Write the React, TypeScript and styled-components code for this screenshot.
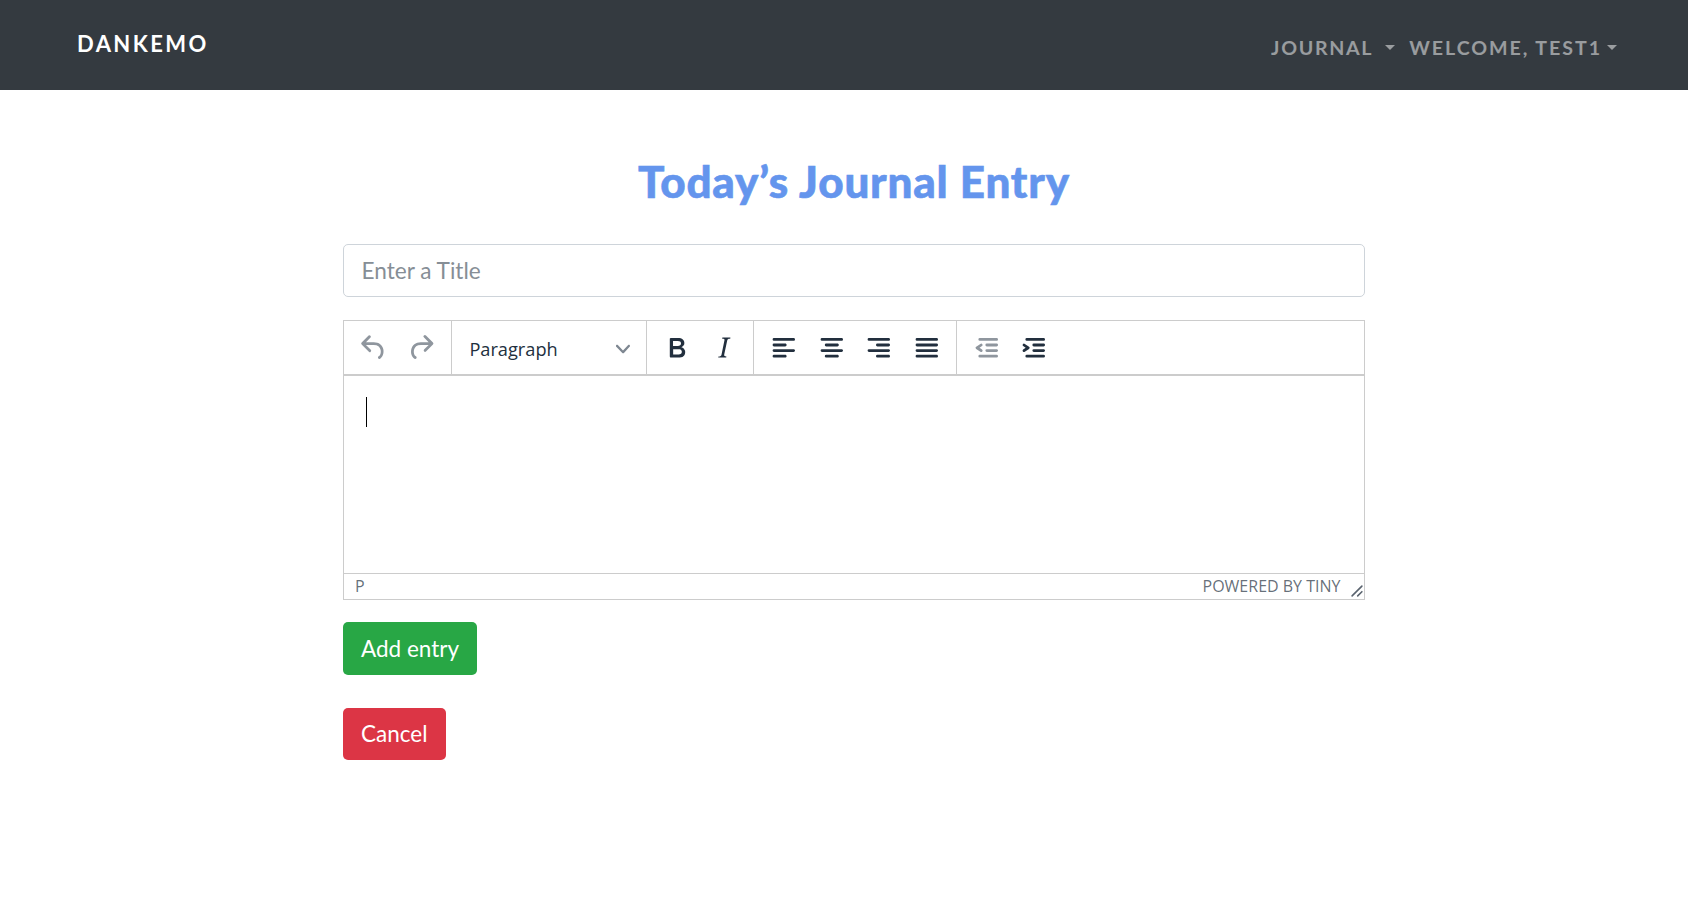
import React from "react";
import styled, { createGlobalStyle } from "styled-components";

const GlobalStyle = createGlobalStyle`
  html, body {
    margin: 0;
    padding: 0;
    background: #fff;
    font-family: 'Lato', sans-serif;
  }
`;

const Navbar = styled.nav`
  box-sizing: border-box;
  height: 90px;
  background-color: #343a40;
  display: flex;
  justify-content: space-between;
  padding: 0 71px 0 77px;
`;

const Brand = styled.div`
  color: #fff;
  font-size: 22px;
  font-weight: 700;
  letter-spacing: 2.4px;
  line-height: 87px;
  text-transform: uppercase;
`;

const NavLinks = styled.div`
  display: flex;
  align-items: flex-start;
  gap: 14px;
  padding-top: 33px;
`;

const NavItem = styled.div<{ $spacing: number }>`
  color: rgba(255, 255, 255, 0.5);
  font-size: 19.6px;
  font-weight: 700;
  letter-spacing: ${(p) => p.$spacing}px;
  line-height: 29px;
  text-transform: uppercase;
  display: flex;
  align-items: center;
`;

const Caret = styled.span<{ $gap: number }>`
  width: 0;
  height: 0;
  margin-left: ${(p) => p.$gap}px;
  border-top: 5.3px solid currentColor;
  border-left: 5.3px solid transparent;
  border-right: 5.3px solid transparent;
`;

const Main = styled.main`
  box-sizing: border-box;
  width: 1022px;
  margin-left: 343px;
  padding-top: 61px;
`;

const Title = styled.h1`
  margin: 0 0 33px;
  color: cornflowerblue;
  font-size: 44px;
  font-weight: 900;
  letter-spacing: 0.8px;
  line-height: 60px;
  text-align: center;
  -webkit-text-stroke: 0.6px cornflowerblue;
`;

const TitleInput = styled.input`
  box-sizing: border-box;
  display: block;
  width: 100%;
  height: 53px;
  margin-bottom: 23px;
  padding: 0 17.6px 1px;
  border: 1px solid #ced4da;
  border-radius: 5px;
  outline: none;
  font-family: 'Lato', sans-serif;
  font-size: 22.6px;
  color: #495057;

  &::placeholder {
    color: #868e96;
    opacity: 1;
  }
`;

const Editor = styled.div`
  box-sizing: border-box;
  height: 279.5px;
  border: 1px solid #ccc;
  display: flex;
  flex-direction: column;
  margin-bottom: 22px;
`;

const Toolbar = styled.div`
  box-sizing: border-box;
  display: flex;
  height: 55px;
  border-bottom: 2px solid #ccc;
  flex-shrink: 0;
`;

const ToolGroup = styled.div<{ $first?: boolean }>`
  display: flex;
  padding: 0 ${(p) => (p.$first ? "6.6px" : "5.6px")} 0 5.6px;
  border-left: ${(p) => (p.$first ? "none" : "1px solid #ccc")};
`;

const ToolButton = styled.div<{ $disabled?: boolean }>`
  width: 47.6px;
  display: flex;
  align-items: center;
  justify-content: center;
  color: ${(p) => (p.$disabled ? "#8f969e" : "#222f3e")};

  svg {
    display: block;
    width: 33.6px;
    height: 33.6px;
    fill: currentColor;
  }
`;

const SelectBox = styled.div`
  box-sizing: border-box;
  width: 194.6px;
  display: flex;
  align-items: center;
  justify-content: space-between;
  padding: 2px 16px 0 17px;
  border-left: 1px solid #ccc;
  color: #222f3e;
  font-family: 'Open Sans', sans-serif;
  font-size: 18.2px;

  svg {
    width: 14px;
    height: 14px;
    fill: #7e8791;
  }
`;

const EditArea = styled.div`
  flex: 1;
  padding: 21px 22px;
`;

const TextCursor = styled.div`
  width: 1px;
  height: 30px;
  background: #000;
`;

const StatusBar = styled.div`
  box-sizing: border-box;
  height: 26px;
  flex-shrink: 0;
  display: flex;
  align-items: center;
  justify-content: space-between;
  padding: 0 0.5px 1px 11px;
  border-top: 1px solid #ccc;
  color: rgba(34, 47, 62, 0.7);
  font-family: 'Open Sans', sans-serif;
  font-size: 16px;
`;

const StatusRight = styled.div`
  display: flex;
  align-items: center;
  gap: 9px;

  svg {
    display: block;
    width: 14px;
    height: 14px;
    margin-top: 10px;
    fill: rgba(34, 47, 62, 0.75);
  }
`;

const ActionButton = styled.button<{ $color: string; $height: number }>`
  display: block;
  box-sizing: border-box;
  height: ${(p) => p.$height}px;
  margin-bottom: 33px;
  padding: 0 18px;
  border: none;
  border-radius: 5px;
  background-color: ${(p) => p.$color};
  color: #fff;
  font-family: 'Lato', sans-serif;
  font-size: 22.5px;
`;

const icons = {
  undo: "M6.4 8H12c3.7 0 6.2 2 6.8 5.1.6 2.7-.4 5.6-2.3 6.8a1 1 0 0 1-1-1.8c1.1-.6 1.8-2.7 1.4-4.6-.5-2.1-2.1-3.5-4.9-3.5H6.4l3.3 3.3a1 1 0 1 1-1.4 1.4l-5-5a1 1 0 0 1 0-1.4l5-5a1 1 0 0 1 1.4 1.4L6.4 8z",
  redo: "M17.6 10H12c-2.8 0-4.4 1.4-4.9 3.5-.4 2 .3 4 1.4 4.6a1 1 0 1 1-1 1.8c-2-1.2-2.9-4.1-2.3-6.8.6-3 3-5.1 6.8-5.1h5.6l-3.3-3.3a1 1 0 1 1 1.4-1.4l5 5a1 1 0 0 1 0 1.4l-5 5a1 1 0 0 1-1.4-1.4l3.3-3.3z",
  bold: "M7.8 19c-.3 0-.5 0-.6-.2l-.2-.5V5.7c0-.2 0-.4.2-.5l.6-.2h5c1.5 0 2.7.3 3.5 1 .7.6 1.1 1.4 1.1 2.5a3 3 0 0 1-.6 1.9c-.4.6-1 1-1.6 1.2.4.1.9.3 1.3.6s.8.7 1 1.2c.4.4.5 1 .5 1.6 0 1.3-.4 2.3-1.3 3-.8.7-2.1 1-3.8 1H7.8zm5-8.3c.6 0 1.2-.1 1.6-.5.4-.3.6-.7.6-1.3 0-1.1-.8-1.7-2.3-1.7H9.3v3.5h3.4zm.5 6c.7 0 1.3-.1 1.7-.4.4-.4.6-.9.6-1.5s-.2-1-.7-1.4c-.4-.3-1-.4-2-.4H9.4v3.8h4z",
  italic: "M16.7 4.7l-.1.9h-.3c-.6 0-1 0-1.4.3-.3.3-.4.6-.5 1.1l-2.1 9.8v.6c0 .5.4.8 1.4.8h.2l-.2.8H8l.2-.8h.2c1.1 0 1.8-.5 2-1.5l2-9.8.1-.5c0-.6-.4-.8-1.4-.8h-.3l.2-.9h5.8z",
  alignLeft: "M5 5h14c.6 0 1 .4 1 1s-.4 1-1 1H5a1 1 0 1 1 0-2zm0 4h8c.6 0 1 .4 1 1s-.4 1-1 1H5a1 1 0 1 1 0-2zm0 8h8c.6 0 1 .4 1 1s-.4 1-1 1H5a1 1 0 0 1 0-2zm0-4h14c.6 0 1 .4 1 1s-.4 1-1 1H5a1 1 0 0 1 0-2z",
  alignCenter: "M5 5h14c.6 0 1 .4 1 1s-.4 1-1 1H5a1 1 0 1 1 0-2zm3 4h8c.6 0 1 .4 1 1s-.4 1-1 1H8a1 1 0 1 1 0-2zm0 8h8c.6 0 1 .4 1 1s-.4 1-1 1H8a1 1 0 0 1 0-2zm-3-4h14c.6 0 1 .4 1 1s-.4 1-1 1H5a1 1 0 0 1 0-2z",
  alignRight: "M5 5h14c.6 0 1 .4 1 1s-.4 1-1 1H5a1 1 0 1 1 0-2zm6 4h8c.6 0 1 .4 1 1s-.4 1-1 1h-8a1 1 0 0 1 0-2zm0 8h8c.6 0 1 .4 1 1s-.4 1-1 1h-8a1 1 0 0 1 0-2zm-6-4h14c.6 0 1 .4 1 1s-.4 1-1 1H5a1 1 0 0 1 0-2z",
  justify: "M5 5h14c.6 0 1 .4 1 1s-.4 1-1 1H5a1 1 0 1 1 0-2zm0 4h14c.6 0 1 .4 1 1s-.4 1-1 1H5a1 1 0 1 1 0-2zm0 4h14c.6 0 1 .4 1 1s-.4 1-1 1H5a1 1 0 0 1 0-2zm0 4h14c.6 0 1 .4 1 1s-.4 1-1 1H5a1 1 0 0 1 0-2z",
  outdent: "M7 5h12c.6 0 1 .4 1 1s-.4 1-1 1H7a1 1 0 1 1 0-2zm5 4h7c.6 0 1 .4 1 1s-.4 1-1 1h-7a1 1 0 0 1 0-2zm0 4h7c.6 0 1 .4 1 1s-.4 1-1 1h-7a1 1 0 0 1 0-2zm-5 4h12a1 1 0 0 1 0 2H7a1 1 0 0 1 0-2zm1.6-3.8a1 1 0 0 1-1.2 1.6l-3-2a1 1 0 0 1 0-1.6l3-2a1 1 0 0 1 1.2 1.6L6.8 12l1.8 1.2z",
  indent: "M7 5h12c.6 0 1 .4 1 1s-.4 1-1 1H7a1 1 0 1 1 0-2zm5 4h7c.6 0 1 .4 1 1s-.4 1-1 1h-7a1 1 0 0 1 0-2zm0 4h7c.6 0 1 .4 1 1s-.4 1-1 1h-7a1 1 0 0 1 0-2zm-5 4h12a1 1 0 0 1 0 2H7a1 1 0 0 1 0-2zm-2.6-3.8L6.2 12l-1.8-1.2a1 1 0 0 1 1.2-1.6l3 2a1 1 0 0 1 0 1.6l-3 2a1 1 0 1 1-1.2-1.6z",
};

const Tool: React.FC<{ name: keyof typeof icons; disabled?: boolean }> = ({ name, disabled }) => (
  <ToolButton $disabled={disabled}>
    <svg viewBox="0 0 24 24">
      <path d={icons[name]} />
    </svg>
  </ToolButton>
);

const App: React.FC = () => {
  return (
    <div>
      <GlobalStyle />
      <Navbar>
        <Brand>Dankemo</Brand>
        <NavLinks>
          <NavItem $spacing={1.7}>
            Journal
            <Caret $gap={12} />
          </NavItem>
          <NavItem $spacing={1.95}>
            Welcome, Test1
            <Caret $gap={5} />
          </NavItem>
        </NavLinks>
      </Navbar>
      <Main>
        <Title>Today’s Journal Entry</Title>
        <TitleInput placeholder="Enter a Title" />
        <Editor>
          <Toolbar>
            <ToolGroup $first>
              <Tool name="undo" disabled />
              <Tool name="redo" disabled />
            </ToolGroup>
            <SelectBox>
              Paragraph
              <svg viewBox="0 0 10 10">
                <path d="M8.7 2.2c.3-.3.8-.3 1 0 .4.4.4.9 0 1.2L5.7 7.8c-.3.3-.9.3-1.2 0L.2 3.4a.8.8 0 0 1 0-1.2c.3-.3.8-.3 1.1 0L5 6l3.7-3.8z" />
              </svg>
            </SelectBox>
            <ToolGroup>
              <Tool name="bold" />
              <Tool name="italic" />
            </ToolGroup>
            <ToolGroup>
              <Tool name="alignLeft" />
              <Tool name="alignCenter" />
              <Tool name="alignRight" />
              <Tool name="justify" />
            </ToolGroup>
            <ToolGroup>
              <Tool name="outdent" disabled />
              <Tool name="indent" />
            </ToolGroup>
          </Toolbar>
          <EditArea>
            <TextCursor />
          </EditArea>
          <StatusBar>
            <span>P</span>
            <StatusRight>
              <span>POWERED BY TINY</span>
              <svg viewBox="0 0 10 10">
                <path d="M8.1 1.1A.5.5 0 1 1 8.9 1.9L1.9 8.9A.5.5 0 1 1 1.1 8.1zM8.1 5.1A.5.5 0 1 1 8.9 5.9L5.9 8.9A.5.5 0 1 1 5.1 8.1z" />
              </svg>
            </StatusRight>
          </StatusBar>
        </Editor>
        <ActionButton $color="#28a745" $height={53}>Add entry</ActionButton>
        <ActionButton $color="#dc3545" $height={52}>Cancel</ActionButton>
      </Main>
    </div>
  );
};

export default App;
